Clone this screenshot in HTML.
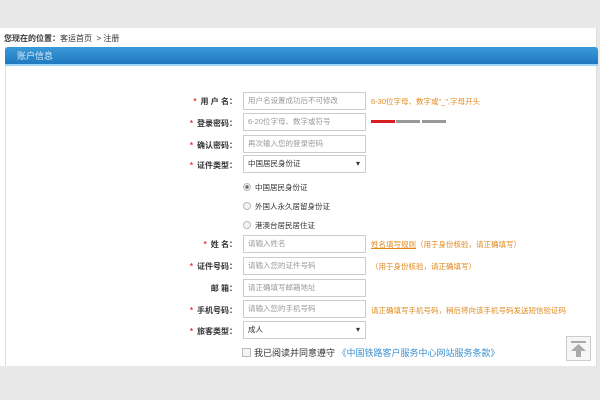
<!DOCTYPE html>
<html><head><meta charset="utf-8"><style>
body{margin:0;width:600px;height:400px;background:#e8e8e8;font-family:"Liberation Sans","Noto Sans CJK SC",sans-serif;position:relative;overflow:hidden;font-size:8px;color:#333}
.wrap{position:absolute;left:0;top:28px;width:596px;height:338px;background:#fff;border-right:1px solid #ddd}
.bc{position:absolute;left:4px;top:33px;font-size:8px;color:#333}
.panel{position:absolute;left:5px;top:47px;width:590px;height:319px;border-left:1px solid #cfe2f0}
.hd{position:absolute;left:5px;top:47px;width:593px;height:19px;background:linear-gradient(#3a9ad8,#1f78c0);border-bottom:2px solid #9fd6f5;border-radius:3px 3px 0 0;color:#d8ecfa;font-size:9px;line-height:19px;padding-left:12px;box-sizing:border-box}
.lb{position:absolute;width:100px;left:137px;text-align:right;font-size:8px;font-weight:bold;color:#333}
.lb i{color:#e33;font-style:normal;margin-right:4px}
.in{position:absolute;left:243px;width:123px;height:18px;border:1px solid #ccc;box-sizing:border-box;font-size:7.5px;color:#999;line-height:16px;padding-left:4px}
.sel{color:#333}
.sel:after{content:"▾";position:absolute;right:5px;top:0;font-size:8px;color:#333}
.hint{position:absolute;left:371px;font-size:7.5px;color:#e08a1e}
.rd{position:absolute;left:243px;font-size:7.5px;color:#333}
.rd b{display:inline-block;width:6px;height:6px;border:1px solid #bbb;border-radius:50%;margin-right:4px;vertical-align:-1px;background:#f4f4f4}
.rd b.on{background:radial-gradient(#666 35%,#eee 45%)}
</style></head><body>
<div class="wrap"></div>
<div class="bc"><b>您现在的位置：</b>客运首页 &nbsp;&gt; 注册</div>
<div class="panel"></div>
<div class="hd">账户信息</div>

<div class="lb" style="top:96px"><i>*</i>用 户 名：</div><div class="in" style="top:92px">用户名设置成功后不可修改</div><div class="hint" style="top:96px">6-30位字母、数字或"_",字母开头</div>
<div class="lb" style="top:118px"><i>*</i>登录密码：</div><div class="in" style="top:113px">6-20位字母、数字或符号</div>
<div style="position:absolute;left:371px;top:120px;width:24px;height:3px;background:#d81e1e"></div><div style="position:absolute;left:396px;top:120px;width:24px;height:3px;background:#999"></div><div style="position:absolute;left:422px;top:120px;width:24px;height:3px;background:#999"></div>
<div class="lb" style="top:140px"><i>*</i>确认密码：</div><div class="in" style="top:135px">再次输入您的登录密码</div>
<div class="lb" style="top:160px"><i>*</i>证件类型：</div><div class="in sel" style="top:155px">中国居民身份证</div>
<div class="rd" style="top:182px"><b class="on"></b>中国居民身份证</div>
<div class="rd" style="top:201px"><b></b>外国人永久居留身份证</div>
<div class="rd" style="top:220px"><b></b>港澳台居民居住证</div>
<div class="lb" style="top:239px"><i>*</i>姓 名：</div><div class="in" style="top:235px">请输入姓名</div><div class="hint" style="top:239px"><u>姓名填写规则</u>（用于身份核验，请正确填写）</div>
<div class="lb" style="top:261px"><i>*</i>证件号码：</div><div class="in" style="top:257px">请输入您的证件号码</div><div class="hint" style="top:261px">（用于身份核验，请正确填写）</div>
<div class="lb" style="top:283px">邮 箱：</div><div class="in" style="top:279px">请正确填写邮箱地址</div>
<div class="lb" style="top:305px"><i>*</i>手机号码：</div><div class="in" style="top:300px">请输入您的手机号码</div><div class="hint" style="top:305px">请正确填写手机号码，稍后将向该手机号码发送短信验证码</div>
<div class="lb" style="top:326px"><i>*</i>旅客类型：</div><div class="in sel" style="top:321px">成人</div>
<div style="position:absolute;left:242px;top:348px;width:7px;height:7px;border:1px solid #bbb;background:#f4f4f4"></div>
<div style="position:absolute;left:254px;top:346px;font-size:9px;color:#333">我已阅读并同意遵守 <span style="color:#3a8fd0">《中国铁路客户服务中心网站服务条款》</span></div>
<div style="position:absolute;left:566px;top:336px;width:25px;height:25px;border:1px solid #ccc;background:#f6f6f6;box-sizing:border-box">
<svg width="23" height="23" viewBox="0 0 23 23"><rect x="4" y="4" width="15" height="2" fill="#aaa"/><path d="M11.5 7 L4 14 H9 V20 H14 V14 H19 Z" fill="#aaa"/></svg></div>
</body></html>
